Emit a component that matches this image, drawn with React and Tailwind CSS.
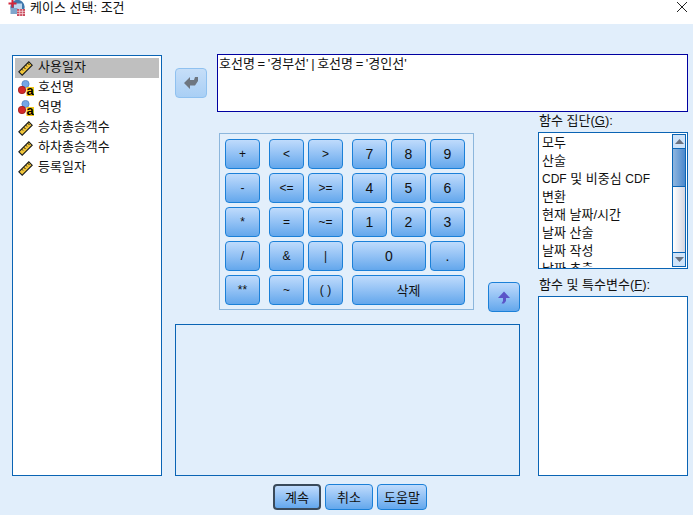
const FONT = "font-['Liberation_Sans','Noto_Sans_CJK_KR',sans-serif]";

function Ruler() {
  return (
    <svg width="15" height="15" viewBox="0 0 15 15" className="shrink-0">
      <path d="M.8 10.800 L10.800 .8 L14.200 4.200 L4.200 14.200 Z" fill="#f2c63a" stroke="#1c1c1c" strokeWidth="1.100" />
      <path d="M3.500 8l1.500 1.500M5.500 6l2 2M7.500 4l1.500 1.500M9.500 2l2 2" stroke="#1c1c1c" strokeWidth="1" fill="none" />
    </svg>
  );
}

function Nominal() {
  return (
    <svg width="16" height="16" viewBox="0 0 16 16" className="shrink-0">
      <circle cx="7.500" cy="4" r="3.600" fill="#74a6e6" stroke="#4d7fc0" strokeWidth="0.800" />
      <circle cx="4" cy="10" r="3.700" fill="#d22a2a" stroke="#9c1a1a" strokeWidth="0.800" />
      <rect x="8.500" y="7" width="7.500" height="9" fill="#f5c518" />
      <text x="12.200" y="15" textAnchor="middle" fontSize="13" fontWeight="700" fontFamily="Liberation Sans" fill="#000">a</text>
    </svg>
  );
}

function TitleIcon() {
  return (
    <svg width="17" height="17" viewBox="0 0 17 17" className="shrink-0">
      <circle cx="9.500" cy="7" r="7.200" fill="#3f78ad" />
      <rect x="6" y="3.500" width="8" height="6" fill="#bcd6ee" />
      <rect x="2.500" y="8" width="7" height="6" fill="#7fa6cc" />
      <path d="M4.500 0v7.500M.5 3.500h8" stroke="#d3263a" strokeWidth="2" />
      <rect x="9" y="9" width="8" height="7" fill="#c94a5c" />
      <path d="M9 11.300h8M9 13.600h8M11.700 9v7M14.400 9v7" stroke="#f4d4d9" strokeWidth="0.800" />
    </svg>
  );
}

function Btn({ children, className = "" }) {
  return (
    <button
      className={`h-[30px] rounded-[4px] border border-[#1b80d8] bg-gradient-to-b from-[#bfdbfc] to-[#63a7ec] leading-none text-[#111] flex items-center justify-center ${className}`}
    >
      {children}
    </button>
  );
}

const leftItems = [
  ["사용일자", "r", true],
  ["호선명", "n"],
  ["역명", "n"],
  ["승차총승객수", "r"],
  ["하차총승객수", "r"],
  ["등록일자", "r"],
];

const groups = ["모두", "산술", null, "변환", "현재 날짜/시간", "날짜 산술", "날짜 작성", "날짜 추출"];

export default function App() {
  return (
    <div className={`w-[693px] h-[515px] overflow-hidden flex flex-col bg-[#e1eefb] text-[13px] text-[#111] ${FONT}`}>
      <div className="h-[24px] bg-white flex items-start pl-[8px] shrink-0">
        <TitleIcon />
        <span className="ml-[5px] leading-[15px]">케이스 선택: 조건</span>
        <svg width="12" height="12" viewBox="0 0 12 12" className="ml-auto mr-[5px] mt-[1px]">
          <path d="M1 1l10 10M11 1L1 11" stroke="#222" strokeWidth="1" fill="none" />
        </svg>
      </div>

      <div className="flex pl-[12px] pt-[30px]">
        <div className="w-[150px] h-[421px] mt-px border border-[#0a64b4] bg-white p-[2px] shrink-0">
          {leftItems.map(([t, k, sel]) => (
            <div key={t} className={`h-[20px] flex items-center pl-[3px] ${sel ? "bg-[#bfbfbf]" : ""}`}>
              <div className="w-[20px] shrink-0">{k === "r" ? <Ruler /> : <Nominal />}</div>
              <span className="pb-[2px]">{t}</span>
            </div>
          ))}
        </div>

        <div className="ml-[13px] w-[513px] flex flex-col">
          <div className="flex items-start">
            <div className="mt-[14px] w-[32px] h-[30px] rounded-[4px] border border-[#8fc1f0] flex items-center justify-center shrink-0 bg-gradient-to-b from-[#c6def8] to-[#a9cff5]">
              <svg width="14" height="14" viewBox="0 0 14 14">
                <path d="M0 7 L6 1 V4 H10 L11 1 H14 V5 L11 9.500 H6 V13 Z" fill="#6e7680" />
              </svg>
            </div>
            <div className="ml-[10px] w-[471px] h-[58px] border border-[#0000a0] bg-white pl-[1px] leading-[17px] whitespace-nowrap [word-spacing:-1px]">
              호선명 = '경부선' | 호선명 = '경인선'
            </div>
          </div>

          <div className="flex">
            <div className="w-[345px] shrink-0 flex flex-col">
              <div className="flex items-end h-[200px]">
                <div className="ml-[44px] mb-[2px] w-[255px] h-[177px] border border-[#8cb6dc] bg-[#e3effb] p-[5px] flex gap-[9px] shrink-0">
                  <div className="grid grid-cols-[35px] gap-y-[4px] content-start text-[12px]">
                    <Btn>+</Btn><Btn>-</Btn><Btn>*</Btn><Btn>/</Btn><Btn>**</Btn>
                  </div>
                  <div className="grid grid-cols-[35px_35px] gap-[4px] content-start text-[12px]">
                    <Btn>&lt;</Btn><Btn>&gt;</Btn>
                    <Btn>&lt;=</Btn><Btn>&gt;=</Btn>
                    <Btn>=</Btn><Btn>~=</Btn>
                    <Btn>&amp;</Btn><Btn>|</Btn>
                    <Btn>~</Btn><Btn>( )</Btn>
                  </div>
                  <div className="grid grid-cols-[35px_35px_35px] gap-[4px] content-start text-[14px]">
                    <Btn>7</Btn><Btn>8</Btn><Btn>9</Btn>
                    <Btn>4</Btn><Btn>5</Btn><Btn>6</Btn>
                    <Btn>1</Btn><Btn>2</Btn><Btn>3</Btn>
                    <Btn className="col-span-2">0</Btn><Btn>.</Btn>
                    <Btn className="col-span-3 text-[13px]">삭제</Btn>
                  </div>
                </div>
                <Btn className="ml-[14px] w-[32px] shrink-0">
                  <svg width="12" height="13" viewBox="0 0 12 13">
                    <path d="M6 .5 L12 7 H8 V10 L6 12.500 H3.500 L5 10 V7 H0 Z" fill="#5a55c8" />
                  </svg>
                </Btn>
              </div>
              <div className="mt-[12px] h-[152px] border border-[#0a64b4]" />
            </div>

            <div className="ml-[18px] w-[150px] shrink-0 flex flex-col">
              <div className="mt-[1px] h-[19px] leading-[16px] pl-px">함수 집단(<u>G</u>):</div>
              <div className="h-[137px] border border-[#0a64b4] bg-white flex overflow-hidden">
                <div className="flex-1 pl-[3px] pt-px overflow-hidden">
                  {groups.map((g) => (
                    <div key={g ?? "cdf"} className="h-[18px] leading-[17px] whitespace-nowrap">
                      {g ?? <><span className="text-[12px]">CDF</span> 및 비중심 <span className="text-[12px]">CDF</span></>}
                    </div>
                  ))}
                </div>
                <div className="w-[14px] my-px mr-px flex flex-col border border-[#0a64b4] bg-gradient-to-r from-white to-[#d5d6e2]">
                  <div className="h-[14px] bg-[#cfe3f8] border-b border-[#0a64b4] flex items-center justify-center">
                    <svg width="9" height="5" viewBox="0 0 9 5"><path d="M4.500 0L9 5H0z" fill="#6a7280" /></svg>
                  </div>
                  <div className="h-[38px] bg-gradient-to-r from-[#8fb6df] to-[#4a88cc] border-b border-[#0a64b4]" />
                  <div className="flex-1" />
                  <div className="h-[14px] bg-[#cfe3f8] border-t border-[#0a64b4] flex items-center justify-center">
                    <svg width="9" height="5" viewBox="0 0 9 5"><path d="M0 0h9L4.500 5z" fill="#6a7280" /></svg>
                  </div>
                </div>
              </div>
              <div className="mt-[8px] h-[19px] leading-[16px] pl-px whitespace-nowrap">함수 및 특수변수(<u>F</u>):</div>
              <div className="h-[180px] border border-[#0a64b4] bg-white" />
            </div>
          </div>
        </div>
      </div>

      <div className="mt-[8px] flex pl-[273px] gap-[4px]">
        <Btn className="!h-[26px] w-[48px] !border-[#3a4a5a] border-2">계속</Btn>
        <Btn className="!h-[26px] w-[48px]">취소</Btn>
        <Btn className="!h-[26px] w-[50px]">도움말</Btn>
      </div>
    </div>
  );
}
